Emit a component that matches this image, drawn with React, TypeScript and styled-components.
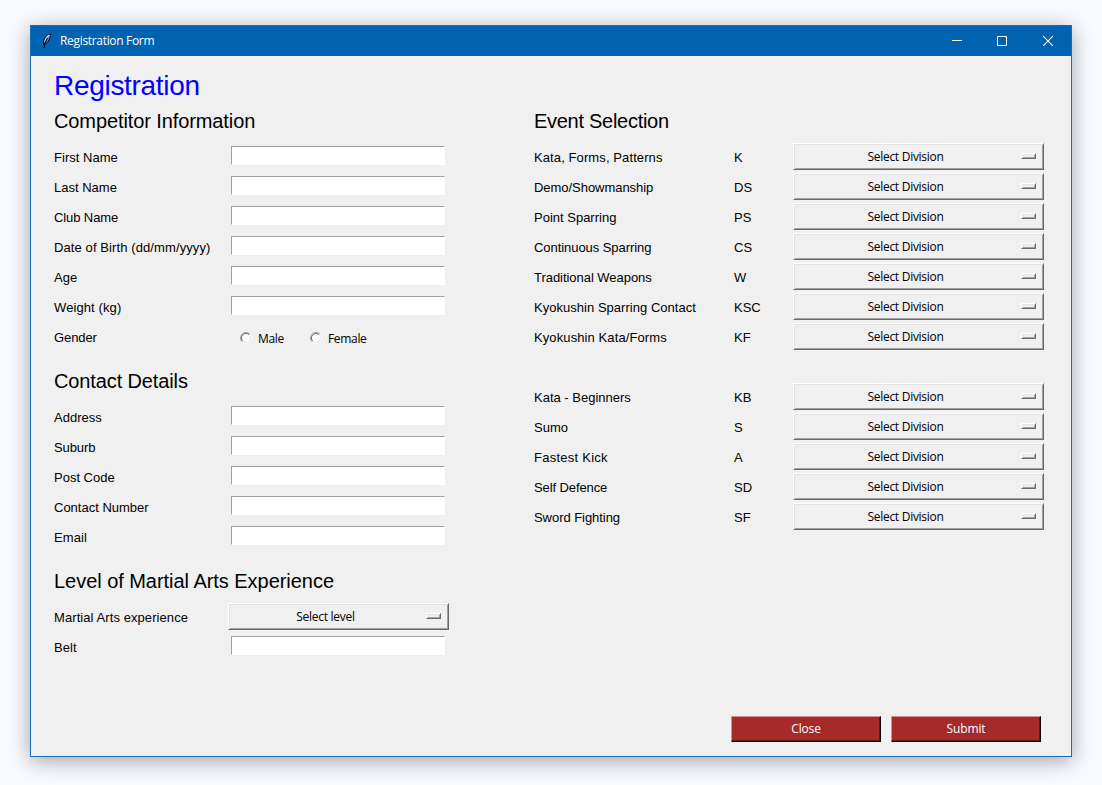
import React from "react";
import styled, { createGlobalStyle } from "styled-components";

const GlobalStyle = createGlobalStyle`
  * { box-sizing: border-box; }
  body { margin: 0; background: #f8faff; }
`;

const arial = `"Liberation Sans", Arial, sans-serif`;
const segoe = `"Segoe UI", "Open Sans", "Noto Sans", sans-serif`;

const Desktop = styled.div`
  height: 785px;
  padding: 25px 30px 28px;
  overflow: hidden;
  background: #f8faff;
`;

const Window = styled.div`
  display: flex;
  flex-direction: column;
  height: 732px;
  border: 1px solid #1a6fb0;
  background: #f0f0f0;
  box-shadow: 0 4px 20px rgba(0, 0, 0, 0.35);
`;

const TitleBar = styled.header`
  display: flex;
  align-items: center;
  height: 30px;
  flex: none;
  padding-left: 8px;
  background: #0063b1;
  color: #fff;
`;

const WindowTitle = styled.span`
  flex: 1;
  margin-left: 5px;
  font: 12px/30px ${segoe};
  letter-spacing: -0.32px;
`;

const WindowButton = styled.button<{ $width: number }>`
  display: flex;
  align-items: center;
  justify-content: center;
  width: ${(p) => p.$width}px;
  height: 30px;
  padding: 0;
  border: 0;
  background: none;
`;

const Body = styled.main`
  display: flex;
  flex: 1;
  flex-direction: column;
  padding-left: 23px;
`;

const PageTitle = styled.h1`
  height: 36px;
  margin: 0;
  font: 400 28px/36px ${arial};
  padding-top: 12px;
  letter-spacing: -0.3px;
  color: #0000ff;
`;

const Columns = styled.div`
  display: flex;
  flex: 1;
`;

const Column = styled.section<{ $width: number }>`
  width: ${(p) => p.$width}px;
`;

const Heading = styled.h2<{ $spacing?: number }>`
  height: 50px;
  margin: 0;
  padding-top: 17px;
  font: 400 20px/24px ${arial};
  letter-spacing: ${(p) => p.$spacing ?? 0}px;
  color: #000;
`;

const Row = styled.div`
  display: flex;
  height: 30px;
`;

const Label = styled.span<{ $width: number; $spacing?: number }>`
  width: ${(p) => p.$width}px;
  flex: none;
  font: 13px/32px ${arial};
  letter-spacing: ${(p) => p.$spacing ?? 0}px;
  white-space: nowrap;
  color: #000;
`;

const Entry = styled.input`
  width: 214px;
  height: 19px;
  margin: 4px 0 0 3px;
  padding: 0 2px;
  border: 1px solid #fff;
  border-top-color: #a0a0a0;
  border-left-color: #a0a0a0;
  border-radius: 0;
  outline: 0;
  background: #fff;
  font: 12px ${segoe};
`;

const OptionMenu = styled.button<{ $width: number }>`
  display: flex;
  width: ${(p) => p.$width}px;
  height: 27px;
  margin-top: 1px;
  padding: 0 7px 0 0;
  border: 1px solid #fff;
  border-right-color: #696969;
  border-bottom-color: #696969;
  background: #f0f0f0;
  box-shadow: inset 1px 1px #e3e3e3, inset -1px -1px #a0a0a0;
  font: 12px/25px ${segoe};
  letter-spacing: -0.28px;
  color: #000;
`;

const OptionText = styled.span`
  flex: 1;
  padding-right: 4px;
  text-align: center;
`;

const Indicator = styled.i`
  width: 15px;
  height: 6px;
  margin-top: 9px;
  border: 1px solid #fff;
  border-right-color: #696969;
  border-bottom-color: #696969;
  box-shadow: inset 1px 1px #e3e3e3, inset -1px -1px #a0a0a0;
`;

const Radio = styled.label<{ $width: number }>`
  display: flex;
  align-items: center;
  width: ${(p) => p.$width}px;
  gap: 6px;
  font: 12px/28px ${segoe};
  letter-spacing: -0.33px;
  color: #000;
`;

const RadioText = styled.span`
  padding-top: 3px;
`;

const RadioGroup = styled.div`
  display: flex;
  padding: 1px 0 0 12px;
`;

const Gap = styled.div`
  height: 30px;
`;

const Actions = styled.footer`
  display: flex;
  justify-content: flex-end;
  gap: 10px;
  height: 40px;
  padding-right: 30px;
`;

const ActionButton = styled.button`
  width: 150px;
  height: 26px;
  padding: 0;
  border: 1px solid #000;
  border-top-color: #db8f8f;
  border-left-color: #db8f8f;
  background: #a52a2a;
  box-shadow: inset -1px -1px #631919;
  font: 12px/24px ${segoe};
  letter-spacing: -0.15px;
  color: #fff;
`;

const Feather = () => (
  <svg width="16" height="16" viewBox="0 0 16 16">
    <path d="M4.700 11.500C3.800 7 6.500 2.200 11.300 1c.6 3-1.300 8-5 10z" fill="#5b8fce" stroke="#071a2c" strokeWidth="1.100" />
    <path d="M6 9C6.300 6 8 3.500 10.300 2" stroke="#dceaff" strokeWidth="1.300" fill="none" />
    <path d="M5 15c0-3 1-6.500 3.500-10" stroke="#000" strokeWidth="1.100" fill="none" />
  </svg>
);

const RadioDot = () => (
  <svg width="12" height="12" viewBox="0 0 12 12">
    <circle cx="6" cy="6" r="5" fill="#fff" />
    <path d="M2.100 9.900A5.500 5.500 0 0 1 9.900 2.100" fill="none" stroke="#a0a0a0" />
    <path d="M2.800 9.200A4.500 4.500 0 0 1 9.200 2.800" fill="none" stroke="#696969" />
    <path d="M9.900 2.100A5.500 5.500 0 0 1 2.100 9.900" fill="none" stroke="#fff" />
    <path d="M9.200 2.800A4.500 4.500 0 0 1 2.800 9.200" fill="none" stroke="#e3e3e3" />
  </svg>
);

type Item = [text: string, spacing: number];
type EventItem = [text: string, code: string, spacing: number];

const competitor: Item[] = [
  ["First Name", 0.03],
  ["Last Name", 0],
  ["Club Name", -0.1],
  ["Date of Birth (dd/mm/yyyy)", 0.1],
  ["Age", 0],
  ["Weight (kg)", 0.1],
];
const contact: Item[] = [
  ["Address", 0],
  ["Suburb", -0.1],
  ["Post Code", 0],
  ["Contact Number", 0],
  ["Email", 0.1],
];
const mainEvents: EventItem[] = [
  ["Kata, Forms, Patterns", "K", 0.1],
  ["Demo/Showmanship", "DS", -0.04],
  ["Point Sparring", "PS", 0],
  ["Continuous Sparring", "CS", -0.06],
  ["Traditional Weapons", "W", -0.04],
  ["Kyokushin Sparring Contact", "KSC", 0.03],
  ["Kyokushin Kata/Forms", "KF", 0.1],
];
const otherEvents: EventItem[] = [
  ["Kata - Beginners", "KB", 0],
  ["Sumo", "S", 0],
  ["Fastest Kick", "A", 0.25],
  ["Self Defence", "SD", -0.1],
  ["Sword Fighting", "SF", -0.05],
];

const Field = ({ item: [text, spacing] }: { item: Item }) => (
  <Row>
    <Label $width={174} $spacing={spacing}>{text}</Label>
    <Entry aria-label={text} />
  </Row>
);

const Menu = ({ width, text }: { width: number; text: string }) => (
  <OptionMenu $width={width}>
    <OptionText>{text}</OptionText>
    <Indicator />
  </OptionMenu>
);

const EventRow = ({ item: [text, code, spacing] }: { item: EventItem }) => (
  <Row>
    <Label $width={200} $spacing={spacing}>{text}</Label>
    <Label $width={59}>{code}</Label>
    <Menu width={251} text="Select Division" />
  </Row>
);

export default function App() {
  return (
    <Desktop>
      <GlobalStyle />
      <Window>
        <TitleBar>
          <Feather />
          <WindowTitle>Registration Form</WindowTitle>
          <WindowButton $width={45} aria-label="Minimize">
            <svg width="10" height="10"><path d="M0 4.500h10" stroke="#fff" /></svg>
          </WindowButton>
          <WindowButton $width={46} aria-label="Maximize">
            <svg width="10" height="10"><path d="M.5.5h9v9h-9z" stroke="#fff" fill="none" /></svg>
          </WindowButton>
          <WindowButton $width={46} aria-label="Close window">
            <svg width="10" height="10"><path d="M0 0l10 10M10 0L0 10" stroke="#fff" strokeWidth="1.100" /></svg>
          </WindowButton>
        </TitleBar>
        <Body>
          <PageTitle>Registration</PageTitle>
          <Columns>
            <Column $width={480}>
              <Heading $spacing={-0.1}>Competitor Information</Heading>
              {competitor.map((f) => <Field key={f[0]} item={f} />)}
              <Row>
                <Label $width={174} $spacing={-0.1}>Gender</Label>
                <RadioGroup>
                  <Radio $width={70}><RadioDot /><RadioText>Male</RadioText></Radio>
                  <Radio $width={70}><RadioDot /><RadioText>Female</RadioText></Radio>
                </RadioGroup>
              </Row>
              <Heading $spacing={-0.12}>Contact Details</Heading>
              {contact.map((f) => <Field key={f[0]} item={f} />)}
              <Heading $spacing={-0.04}>Level of Martial Arts Experience</Heading>
              <Row>
                <Label $width={174} $spacing={0.08}>Martial Arts experience</Label>
                <Menu width={221} text="Select level" />
              </Row>
              <Field item={["Belt", 0.1]} />
            </Column>
            <Column $width={510}>
              <Heading $spacing={-0.28}>Event Selection</Heading>
              {mainEvents.map((e) => <EventRow key={e[1]} item={e} />)}
              <Gap />
              {otherEvents.map((e) => <EventRow key={e[1]} item={e} />)}
            </Column>
          </Columns>
          <Actions>
            <ActionButton>Close</ActionButton>
            <ActionButton>Submit</ActionButton>
          </Actions>
        </Body>
      </Window>
    </Desktop>
  );
}
